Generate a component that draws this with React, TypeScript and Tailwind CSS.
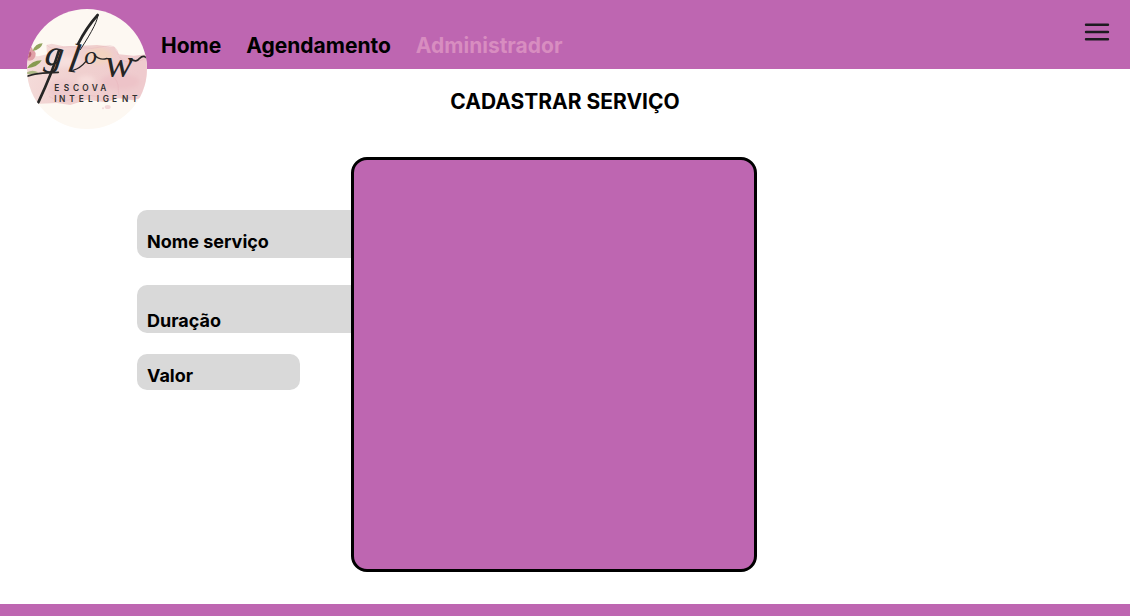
function Logo() {
  return (
    <svg viewBox="0 0 360 360" className="size-[120px]" role="img" aria-label="Glow Escova Inteligente">
      <defs>
        <clipPath id="disc">
          <circle cx="180" cy="180" r="180" />
        </clipPath>
        <filter id="soft" x="-20%" y="-20%" width="140%" height="140%">
          <feGaussianBlur stdDeviation="7" />
        </filter>
        <linearGradient id="wash" x1="0" y1="0" x2="1" y2="0.2">
          <stop offset="0" stopColor="#f5dedc" />
          <stop offset="0.5" stopColor="#f0d0cf" />
          <stop offset="1" stopColor="#efcbce" />
        </linearGradient>
      </defs>
      <g clipPath="url(#disc)">
        <rect width="360" height="360" fill="#fdf8f2" />
        <path
          d="M0 140 L34 142 L60 136 L58 108 L74 104 L110 112 L160 110 L210 108 L262 114 L276 136 L320 140 L360 136 L360 262 L318 274 L274 268 L236 280 L180 272 L130 288 L90 282 L40 284 L0 270 Z"
          fill="url(#wash)"
        />
        <g filter="url(#soft)">
          <ellipse cx="215" cy="142" rx="40" ry="24" fill="#f3d3bf" />
          <ellipse cx="115" cy="158" rx="48" ry="16" fill="#f6dfdd" />
          <ellipse cx="280" cy="218" rx="58" ry="24" fill="#edc3c8" />
          <ellipse cx="105" cy="240" rx="42" ry="30" fill="#eecacd" />
          <ellipse cx="178" cy="214" rx="26" ry="14" fill="#f6dcda" />
        </g>
        <g fill="none" stroke="#e5afb8" strokeWidth="2" opacity="0.5">
          <path d="M60 108 Q70 122 98 116 T160 116 T232 112 T274 138" />
          <path d="M276 142 Q290 164 322 158 T360 146" />
          <path d="M66 262 Q98 286 134 270 T210 262" />
          <path d="M250 196 Q276 212 274 244 T318 264" />
        </g>
        <ellipse cx="242" cy="294" rx="9" ry="6" fill="#f3d6d8" />
        <circle cx="228" cy="298" r="3" fill="#f3d6d8" />
        <path d="M0 112 Q14 108 18 124 Q32 130 22 148 Q16 158 0 154 Z" fill="#e0a0a6" />
        <path d="M0 126 Q14 124 13 137 Q10 149 0 145 Z" fill="#b65f72" />
        <path d="M17 126 Q24 104 47 103 Q42 122 17 126" fill="#92a35e" />
        <path d="M0 178 Q14 154 44 154 Q34 174 0 178" fill="#879b51" />
        <path d="M0 190 Q16 180 34 190 Q18 198 0 195" fill="#adb886" />
        <g fill="#252525" fontFamily="'Liberation Serif', serif" fontStyle="italic">
          <text>
            <tspan x="50" y="166" fontSize="112" rotate="8">g</tspan>
            <tspan x="118" y="186" fontSize="124" rotate="10">l</tspan>
            <tspan x="172" y="164" fontSize="76">o</tspan>
            <tspan x="234" y="204" fontSize="126">w</tspan>
          </text>
        </g>
        <g fill="none" stroke="#252525" strokeLinecap="round" strokeLinejoin="round">
          <path d="M96 124 Q76 190 34 280" strokeWidth="8" />
          <path d="M0 202 Q22 192 94 190" strokeWidth="5" />
          <path d="M212 18 Q178 56 154 104" strokeWidth="8" />
          <path d="M212 18 Q216 36 160 122" strokeWidth="3" />
          <path d="M138 184 Q160 178 176 158" strokeWidth="4" />
          <path d="M202 138 Q220 156 240 148" strokeWidth="4" />
          <path d="M312 150 Q328 162 338 148 Q348 138 358 146" strokeWidth="5" />
        </g>
        <g fill="#303030" fontFamily="Inter, sans-serif" fontSize="25" fontWeight="600">
          <text x="82 110 138 166 194 220" y="245">ESCOVA</text>
          <text x="82 96 127 155 183 209 227 255 285 315 341" y="278">INTELIGENT</text>
        </g>
      </g>
    </svg>
  );
}

function MenuIcon() {
  return (
    <svg viewBox="0 0 26 20" className="h-5 w-[26px]" fill="none" aria-hidden="true">
      <path
        d="M2 2.7H24M2 10H24M2 17.3H24"
        stroke="#1d1b20"
        strokeWidth="2.4"
        strokeLinecap="round"
      />
    </svg>
  );
}

const fieldInput = "w-0 min-w-0 flex-1 bg-transparent font-normal outline-none";

export default function App() {
  return (
    <div className="flex min-h-screen flex-col bg-white font-[Inter,sans-serif] text-black">
      <header className="relative flex h-[69px] items-center justify-between bg-[#be66b1] pr-5 pl-[161px]">
        <a href="#inicio" className="absolute top-[9px] left-[27px]">
          <Logo />
        </a>
        <nav className="flex gap-[25px] pt-[22px] text-[21px] leading-6 font-bold">
          <a href="#home">Home</a>
          <a href="#agendamento">Agendamento</a>
          <a href="#administrador" aria-current="page" className="text-[#d88dc0]">
            Administrador
          </a>
        </nav>
        <button type="button" aria-label="Abrir menu" className="-mt-1.5">
          <MenuIcon />
        </button>
      </header>

      <main className="flex flex-1 flex-col pb-8">
        <h1 className="pt-[21px] text-center text-[21px] leading-6 font-bold">CADASTRAR SERVIÇO</h1>
        <div className="mt-[43px] grid flex-1 grid-cols-[137fr_214fr_406fr_373fr]">
          <form className="col-start-2 flex min-w-0 flex-col pt-[53px] text-lg leading-6 font-bold">
            <label className="flex h-12 items-end gap-2 rounded-l-[10px] bg-[#d9d9d9] px-[10px] pb-1">
              Nome serviço
              <input type="text" name="nome" className={fieldInput} />
            </label>
            <label className="mt-[27px] flex h-12 items-end gap-2 rounded-l-[10px] bg-[#d9d9d9] px-[10px]">
              Duração
              <input type="text" name="duracao" className={fieldInput} />
            </label>
            <label className="mt-[21px] flex h-9 w-[76%] items-end gap-2 rounded-[10px] bg-[#d9d9d9] px-[10px] pb-0.5">
              Valor
              <input type="text" name="valor" className={fieldInput} />
            </label>
          </form>
          <section aria-label="Serviços" className="rounded-2xl border-3 border-black bg-[#be66b1]" />
        </div>
      </main>

      <footer className="h-3 bg-[#be66b1]" />
    </div>
  );
}
